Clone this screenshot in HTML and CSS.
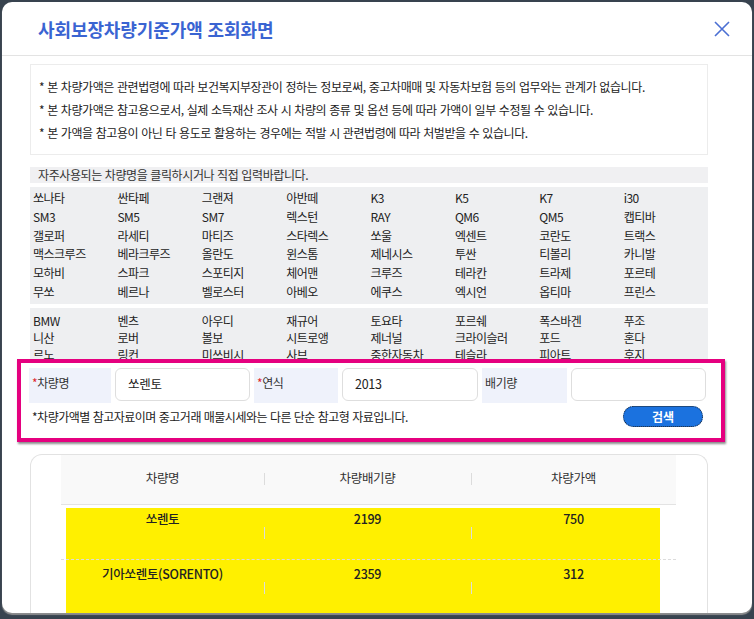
FILE: index.html
```html
<!DOCTYPE html>
<html lang="ko">
<head>
<meta charset="utf-8">
<title>사회보장차량기준가액 조회화면</title>
<link rel="stylesheet" href="styles.css">
</head>
<body>
<div class="modal">
  <header class="modal-head">
    <h1 class="modal-title">사회보장차량기준가액 조회화면</h1>
    <button class="close-btn" type="button" aria-label="닫기">
      <svg width="16" height="16" viewBox="0 0 16 16"><path d="M1 1 L15 15 M15 1 L1 15" stroke="#4b6fd3" stroke-width="1.6" fill="none"/></svg>
    </button>
  </header>
  <div class="modal-body">
    <div class="notice">
      <p>* 본 차량가액은 관련법령에 따라 보건복지부장관이 정하는 정보로써, 중고차매매 및 자동차보험 등의 업무와는 관계가 없습니다.</p>
      <p>* 본 차량가액은 참고용으로서, 실제 소득재산 조사 시 차량의 종류 및 옵션 등에 따라 가액이 일부 수정될 수 있습니다.</p>
      <p>* 본 가액을 참고용이 아닌 타 용도로 활용하는 경우에는 적발 시 관련법령에 따라 처벌받을 수 있습니다.</p>
    </div>
    <div class="hint">자주사용되는 차량명을 클릭하시거나 직접 입력바랍니다.</div>
    <ul class="car-grid domestic">
      <li>쏘나타</li><li>싼타페</li><li>그랜져</li><li>아반떼</li><li>K3</li><li>K5</li><li>K7</li><li>i30</li>
      <li>SM3</li><li>SM5</li><li>SM7</li><li>렉스턴</li><li>RAY</li><li>QM6</li><li>QM5</li><li>캡티바</li>
      <li>갤로퍼</li><li>라세티</li><li>마티즈</li><li>스타렉스</li><li>쏘울</li><li>엑센트</li><li>코란도</li><li>트랙스</li>
      <li>맥스크루즈</li><li>베라크루즈</li><li>올란도</li><li>윈스톰</li><li>제네시스</li><li>투싼</li><li>티볼리</li><li>카니발</li>
      <li>모하비</li><li>스파크</li><li>스포티지</li><li>체어맨</li><li>크루즈</li><li>테라칸</li><li>트라제</li><li>포르테</li>
      <li>무쏘</li><li>베르나</li><li>벨로스터</li><li>아베오</li><li>에쿠스</li><li>엑시언</li><li>옵티마</li><li>프린스</li>
    </ul>
    <ul class="car-grid imported">
      <li>BMW</li><li>벤츠</li><li>아우디</li><li>재규어</li><li>토요타</li><li>포르쉐</li><li>폭스바겐</li><li>푸조</li>
      <li>니산</li><li>로버</li><li>볼보</li><li>시트로앵</li><li>제너널</li><li>크라이슬러</li><li>포드</li><li>혼다</li>
      <li>르노</li><li>링컨</li><li>미쓰비시</li><li>사브</li><li>중한자동차</li><li>테슬라</li><li>피아트</li><li>후지</li>
    </ul>
    <form class="search-box">
      <div class="search-row">
        <label class="field-label"><span class="req">*</span>차량명</label>
        <input class="field-input" type="text" value="쏘렌토">
        <label class="field-label"><span class="req">*</span>연식</label>
        <input class="field-input" type="text" value="2013">
        <label class="field-label">배기량</label>
        <input class="field-input" type="text" value="">
      </div>
      <div class="search-foot">
        <span class="search-note">*차량가액별 참고자료이며 중고거래 매물시세와는 다른 단순 참고형 자료입니다.</span>
        <button class="search-btn" type="button">검색</button>
      </div>
    </form>
    <div class="result-box">
      <div class="result-table">
        <div class="result-head">
          <div class="cell">차량명</div>
          <div class="cell">차량배기량</div>
          <div class="cell">차량가액</div>
        </div>
        <div class="result-rows">
          <div class="result-row">
            <div class="cell">쏘렌토</div>
            <div class="cell">2199</div>
            <div class="cell">750</div>
          </div>
          <div class="result-row">
            <div class="cell">기아쏘렌토(SORENTO)</div>
            <div class="cell">2359</div>
            <div class="cell">312</div>
          </div>
        </div>
        <p class="result-foot">※ 조회 결과는 참고용이며 실제 소득재산 조사 시 차량가액은 달라질 수 있습니다.</p>
      </div>
    </div>
  </div>
</div>
</body>
</html>
```

FILE: styles.css
```css
* { box-sizing: border-box; }
html, body { margin: 0; padding: 0; }
body {
  background: #38434f;
  font-family: "Noto Sans CJK KR", "Noto Sans", sans-serif;
  color: #222;
  width: 754px;
  height: 619px;
  overflow: hidden;
}
.modal {
  margin: 2px;
  width: 750px;
  height: 611px;
  background: #fff;
  border-radius: 10px;
  overflow: hidden;
  box-shadow: 0 2px 1px rgba(150,150,150,0.9);
}
.modal-head {
  height: 54px;
  border-bottom: 1px solid #e3e3e3;
  display: flex;
  align-items: center;
  justify-content: space-between;
  padding: 0 22px 0 36px;
}
.modal-title {
  margin: 0;
  font-size: 18px;
  font-weight: 700;
  color: #3a64d2;
  letter-spacing: -0.1px;
  line-height: 1;
}
.close-btn {
  border: 0;
  background: none;
  padding: 0;
  width: 16px;
  height: 16px;
  display: flex;
}
.modal-body {
  padding: 8px 44px 0 28px;
}
.notice {
  border: 1px solid #ececec;
  padding: 10px 8px 10px 8px;
  font-size: 12px;
  letter-spacing: -0.4px;
  line-height: 23px;
  color: #222;
}
.notice p { margin: 0; white-space: nowrap; }
.hint {
  margin-top: 12px;
  height: 16px;
  background: #f0f0f2;
  padding-left: 8px;
  font-size: 12px;
  letter-spacing: -0.4px;
  line-height: 16px;
  color: #333;
}
.car-grid {
  list-style: none;
  margin: 4px 0 0;
  padding: 2px 0 2px 3px;
  background: #eeeff1;
  display: grid;
  grid-template-columns: repeat(8, 1fr);
  font-size: 12px;
  letter-spacing: -0.5px;
  color: #222;
}
.car-grid li { cursor: pointer; white-space: nowrap; }
.domestic { line-height: 18.8px; }
.imported {
  line-height: 17px;
  padding-top: 4px;
  height: 51px;
  overflow: hidden;
}
.search-box {
  margin: 0 -17px 0 -13px;
  border: 4px solid #e5007f;
  background: #fff;
  padding: 5px 14px 0 8px;
  box-shadow: 1px 2px 2px rgba(0,0,0,0.45);
  position: relative;
}
.search-row {
  display: grid;
  grid-template-columns: 82px 135px 84px 136px 85px 135px;
  column-gap: 4px;
  height: 35px;
}
.field-label {
  background: #eff2fb;
  font-size: 12px;
  letter-spacing: -0.4px;
  color: #333;
  padding: 6px 0 0 3px;
}
.req { color: #e0262b; }
.field-input {
  height: 33px;
  border: 1px solid #dedede;
  border-radius: 6px;
  font: inherit;
  font-size: 12.5px;
  color: #222;
  padding: 0 0 2px 12px;
  letter-spacing: -0.3px;
}
.search-foot {
  height: 35px;
  display: flex;
  align-items: flex-start;
  justify-content: space-between;
  padding: 3px 4px 0 3px;
}
.search-note {
  font-size: 12px;
  letter-spacing: -0.5px;
  line-height: 21px;
  color: #222;
}
.search-btn {
  width: 80px;
  height: 21px;
  border: 0;
  border-radius: 11px;
  background: #1b72df;
  color: #fff;
  font: inherit;
  font-size: 12px;
  font-weight: 700;
  outline: 1px dotted #222;
  outline-offset: -1px;
  padding: 0;
  line-height: 21px;
}
.result-box {
  margin-top: 12px;
  border: 1px solid #e2e2e2;
  border-bottom: 0;
  border-radius: 12px 12px 0 0;
  padding: 0 31px 0 30px;
  height: 170px;
}
.result-head {
  display: grid;
  grid-template-columns: 203px 207px 205px;
  height: 50px;
  background: #f9f9f9;
  border-bottom: 1px solid #e3e3e3;
  font-size: 12.5px;
  color: #333;
  letter-spacing: -0.3px;
}
.result-head .cell {
  display: flex;
  align-items: center;
  justify-content: center;
  padding-bottom: 3px;
}
.result-head .cell + .cell,
.result-row .cell + .cell {
  background: linear-gradient(#dcdcdc, #dcdcdc) left center / 1px 12px no-repeat;
}
.result-rows {
  background: linear-gradient(#fff000, #fff000) 5px 3px / 594px 105px no-repeat;
}
.result-row {
  display: grid;
  grid-template-columns: 203px 207px 205px;
  height: 55px;
  border-bottom: 1px dashed #dcdcdc;
  font-size: 12.5px;
  font-weight: 500;
  color: #222;
  letter-spacing: -0.3px;
}
.result-row .cell {
  text-align: center;
  padding-top: 5px;
  line-height: 18px;
}
.result-row .cell + .cell {
  background-position: left 22px;
}
.result-foot {
  margin: 0;
  font-size: 11.5px;
  color: #555;
  text-align: center;
}
```
